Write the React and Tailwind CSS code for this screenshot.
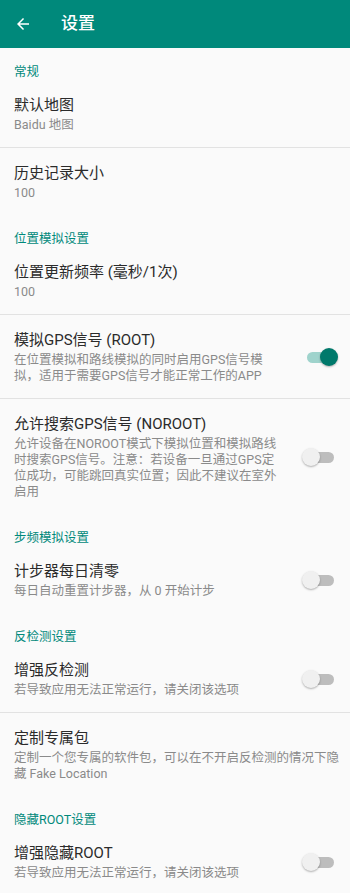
import React from "react";

const font = { fontFamily: '"Roboto", "Noto Sans CJK SC", sans-serif' };

function Toggle({ on }) {
  return (
    <div className="relative w-[36px] h-[20px] flex items-center">
      <div className={"absolute left-[5px] w-[27px] h-[11px] rounded-full " + (on ? "bg-[#9fd3cc]" : "bg-[#bdbdbd]")} />
      <div
        className={
          "absolute top-[1px] w-[18px] h-[18px] rounded-full shadow-[0_1px_2px_rgba(0,0,0,0.3)] " +
          (on ? "left-[18px] bg-[#00796b]" : "left-0 bg-[#f0f0f0]")
        }
      />
    </div>
  );
}

function Category({ children }) {
  return (
    <div className="pl-[14px] pt-[16px] pb-0 text-[12.5px] leading-[16px] text-[#00897b]">{children}</div>
  );
}

function Item({ title, summary, toggle, divider }) {
  const hasToggle = toggle !== undefined;
  return (
    <div
      className={
        "flex items-center pl-[14px] pt-[15px] pb-[14px] " +
        (hasToggle ? "pr-[12px] " : "pr-[6px] ") +
        (divider ? "border-b border-[#e2e2e2]" : "")
      }
    >
      <div className={hasToggle ? "w-[272px] shrink-0" : "flex-1"}>
        <div className="text-[15px] leading-[20px] text-[#2b2b2b]">{title}</div>
        {summary && <div className="text-[12.5px] leading-[16px] text-[#8a8a8a] mt-[2px]">{summary}</div>}
      </div>
      {hasToggle && (
        <div className="flex-1 flex justify-end">
          <Toggle on={toggle} />
        </div>
      )}
    </div>
  );
}

export default function App() {
  return (
    <div className="w-[350px] h-[893px] bg-[#fafafa] overflow-hidden" style={font}>
      <div className="h-[48px] bg-[#00897b] flex items-center">
        <svg className="ml-[14px]" width="18" height="18" viewBox="0 0 24 24" fill="white">
          <path d="M20 11H7.83l5.59-5.59L12 4l-8 8 8 8 1.41-1.41L7.83 13H20v-2z" />
        </svg>
        <div className="ml-[29px] text-[17px] text-white font-medium">设置</div>
      </div>
      <Category>常规</Category>
      <Item title="默认地图" summary="Baidu 地图" divider />
      <Item title="历史记录大小" summary="100" />
      <Category>位置模拟设置</Category>
      <Item title="位置更新频率 (毫秒/1次)" summary="100" divider />
      <Item
        title="模拟GPS信号 (ROOT)"
        summary="在位置模拟和路线模拟的同时启用GPS信号模拟，适用于需要GPS信号才能正常工作的APP"
        toggle={true}
        divider
      />
      <Item
        title="允许搜索GPS信号 (NOROOT)"
        summary="允许设备在NOROOT模式下模拟位置和模拟路线时搜索GPS信号。注意：若设备一旦通过GPS定位成功，可能跳回真实位置；因此不建议在室外启用"
        toggle={false}
      />
      <Category>步频模拟设置</Category>
      <Item title="计步器每日清零" summary="每日自动重置计步器，从 0 开始计步" toggle={false} />
      <Category>反检测设置</Category>
      <Item title="增强反检测" summary="若导致应用无法正常运行，请关闭该选项" toggle={false} divider />
      <Item title="定制专属包" summary="定制一个您专属的软件包，可以在不开启反检测的情况下隐藏 Fake Location" />
      <Category>隐藏ROOT设置</Category>
      <Item title="增强隐藏ROOT" summary="若导致应用无法正常运行，请关闭该选项" toggle={false} />
    </div>
  );
}
